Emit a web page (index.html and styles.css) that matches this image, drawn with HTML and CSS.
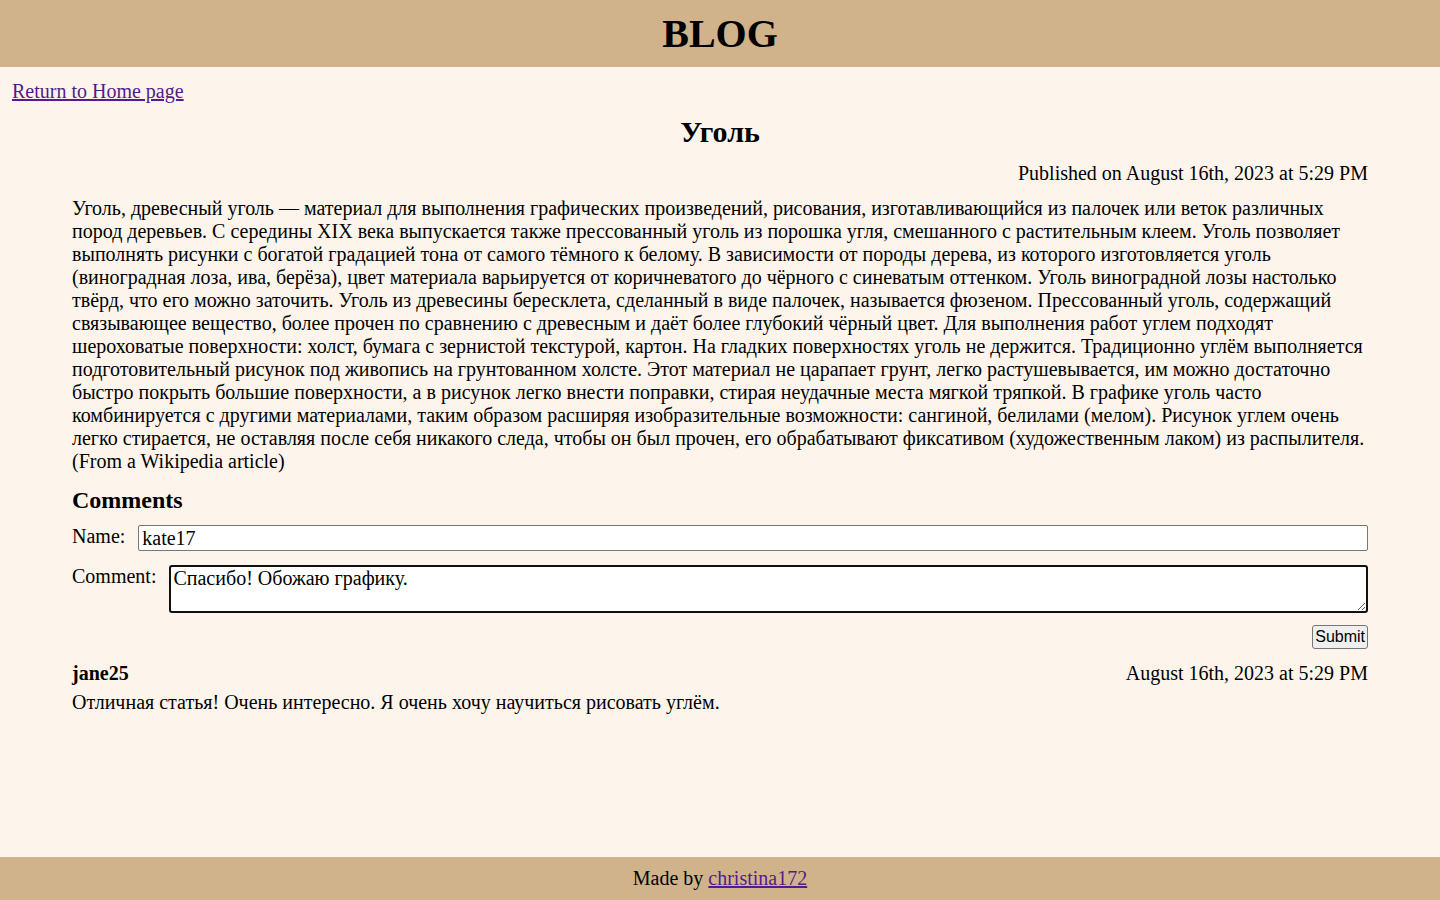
FILE: index.html
```html
<!DOCTYPE html>
<html lang="ru">
<head>
<meta charset="utf-8">
<title>Уголь</title>
<link rel="stylesheet" href="styles.css">
</head>
<body>
<header class="site-header">
  <h1 class="site-title">BLOG</h1>
</header>
<nav class="nav">
  <a class="link" href="#">Return to Home page</a>
</nav>
<main class="main">
  <h2 class="post-title">Уголь</h2>
  <p class="post-date">Published on August 16th, 2023 at 5:29 PM</p>
  <p class="post-body">Уголь, древесный уголь — материал для выполнения графических произведений, рисования, изготавливающийся из палочек или веток различных пород деревьев. С середины XIX века выпускается также прессованный уголь из порошка угля, смешанного с растительным клеем. Уголь позволяет выполнять рисунки с богатой градацией тона от самого тёмного к белому. В зависимости от породы дерева, из которого изготовляется уголь (виноградная лоза, ива, берёза), цвет материала варьируется от коричневатого до чёрного с синеватым оттенком. Уголь виноградной лозы настолько твёрд, что его можно заточить. Уголь из древесины бересклета, сделанный в виде палочек, называется фюзеном. Прессованный уголь, содержащий связывающее вещество, более прочен по сравнению с древесным и даёт более глубокий чёрный цвет. Для выполнения работ углем подходят шероховатые поверхности: холст, бумага с зернистой текстурой, картон. На гладких поверхностях уголь не держится. Традиционно углём выполняется подготовительный рисунок под живопись на грунтованном холсте. Этот материал не царапает грунт, легко растушевывается, им можно достаточно быстро покрыть большие поверхности, а в рисунок легко внести поправки, стирая неудачные места мягкой тряпкой. В графике уголь часто комбинируется с другими материалами, таким образом расширяя изобразительные возможности: сангиной, белилами (мелом). Рисунок углем очень легко стирается, не оставляя после себя никакого следа, чтобы он был прочен, его обрабатывают фиксативом (художественным лаком) из распылителя. (From a Wikipedia article)</p>

  <section class="comments">
    <h3 class="comments-title">Comments</h3>
    <form class="comment-form">
      <div class="form-row form-row-name">
        <label class="form-label" for="name">Name:</label>
        <input class="form-input" id="name" type="text" value="kate17">
      </div>
      <div class="form-row form-row-comment">
        <label class="form-label" for="comment">Comment:</label>
        <textarea class="form-textarea" id="comment">Спасибо! Обожаю графику.</textarea>
      </div>
      <div class="form-actions">
        <button class="submit-btn" type="button">Submit</button>
      </div>
    </form>

    <div class="comment">
      <div class="comment-head">
        <span class="comment-author">jane25</span>
        <span class="comment-date">August 16th, 2023 at 5:29 PM</span>
      </div>
      <p class="comment-text">Отличная статья! Очень интересно. Я очень хочу научиться рисовать углём.</p>
    </div>
  </section>
</main>
<footer class="site-footer">
  <p class="footer-text">Made by <a class="link" href="#">christina172</a></p>
</footer>
</body>
</html>
```

FILE: styles.css
```css
html, body {
  margin: 0;
  padding: 0;
}

body {
  min-height: 100vh;
  display: flex;
  flex-direction: column;
  background: #fdf5ec;
  color: #000;
  font-family: "Liberation Serif", "Times New Roman", serif;
  font-size: 20px;
  line-height: 23px;
}

.link {
  color: #551a8b;
  text-decoration: underline;
}

.site-header {
  background: #d1b38b;
  height: 67px;
  display: flex;
  align-items: center;
  justify-content: center;
}

.site-title {
  margin: 0;
  font-size: 40px;
  line-height: 46px;
  font-weight: bold;
}

.nav {
  padding: 13px 12px 0;
}

.main {
  flex: 1;
  width: 90%;
  margin: 0 auto;
}

.post-title {
  margin: 12px 0 0;
  text-align: center;
  font-size: 30px;
  line-height: 34px;
  font-weight: bold;
}

.post-date {
  margin: 13px 0 0;
  text-align: right;
}

.post-body {
  margin: 12px 0 0;
}

.comments-title {
  margin: 13px 0 0;
  font-size: 24px;
  line-height: 28px;
  font-weight: bold;
}

.comment-form {
  margin-top: 11px;
}

.form-row {
  display: flex;
  gap: 13px;
}

.form-row-name {
  align-items: center;
}

.form-row-comment {
  margin-top: 14px;
  align-items: flex-start;
}

.form-label {
  white-space: nowrap;
}

.form-row-name .form-label {
  margin-top: -3px;
}

.form-input {
  flex: 1;
  box-sizing: border-box;
  height: 26px;
  padding: 0 3px;
  border: 1px solid #767676;
  border-radius: 2px;
  background: #fff;
  font-family: inherit;
  font-size: 20px;
  color: #000;
}

.form-textarea {
  flex: 1;
  box-sizing: border-box;
  height: 48px;
  padding: 0 2px;
  border: 2px solid #101010;
  border-radius: 3px;
  background: #fff;
  font-family: inherit;
  font-size: 20px;
  line-height: 23px;
  color: #000;
  resize: vertical;
  outline: none;
}

.form-actions {
  display: flex;
  justify-content: flex-end;
  margin-top: 12px;
}

.submit-btn {
  box-sizing: border-box;
  height: 24px;
  padding: 0 2px;
  font-family: "Liberation Sans", Arial, sans-serif;
  font-size: 16px;
  color: #000;
  background: #efefef;
  border: 1px solid #767676;
  border-radius: 3px;
}

.comment {
  margin-top: 13px;
}

.comment-head {
  display: flex;
  justify-content: space-between;
}

.comment-author {
  font-weight: bold;
}

.comment-text {
  margin: 6px 0 0;
}

.site-footer {
  background: #d1b38b;
  height: 43px;
  box-sizing: border-box;
  padding-top: 10px;
  text-align: center;
}

.footer-text {
  margin: 0;
}
```
